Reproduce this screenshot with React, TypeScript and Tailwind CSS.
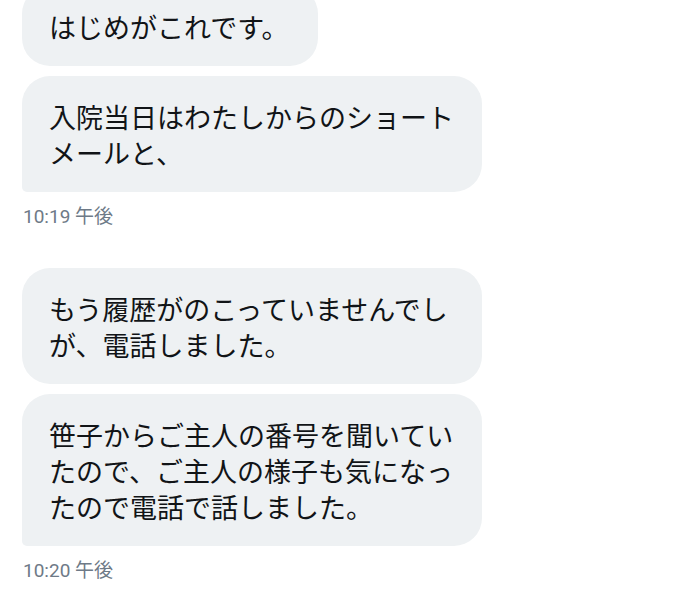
import React from "react";

type Msg = { text: string[]; last?: boolean };
type Group = { msgs: Msg[]; time: string };

const groups: Group[] = [
  {
    msgs: [
      { text: ["はじめがこれです。"] },
      { text: ["入院当日はわたしからのショート", "メールと、"], last: true },
    ],
    time: "10:19 午後",
  },
  {
    msgs: [
      { text: ["もう履歴がのこっていませんでし", "が、電話しました。"] },
      {
        text: ["笹子からご主人の番号を聞いてい", "たので、ご主人の様子も気になっ", "たので電話で話しました。"],
        last: true,
      },
    ],
    time: "10:20 午後",
  },
];

function Bubble({ msg }: { msg: Msg }) {
  const multi = msg.text.length > 1;
  return (
    <div
      className={`self-start bg-[#eef1f3] text-[#111417] text-[27px] leading-[36px] pl-[27px] pr-[29px] pt-[23px] pb-[21px] rounded-[28px] ${
        multi ? "w-[460px]" : ""
      } ${msg.last ? "rounded-bl-[5px]" : ""}`}
      style={{ fontFamily: '"Noto Sans CJK JP", sans-serif' }}
    >
      {msg.text.map((l, i) => (
        <div key={i} className="whitespace-nowrap">
          {l}
        </div>
      ))}
    </div>
  );
}

export default function App() {
  return (
    <div className="w-[676px] h-[598px] overflow-hidden bg-white">
      <div className="flex flex-col pl-[22px] -mt-[14px] gap-[38px]">
        {groups.map((g, gi) => (
          <div key={gi} className="flex flex-col">
            <div className="flex flex-col gap-[10px]">
              {g.msgs.map((m, mi) => (
                <Bubble key={mi} msg={m} />
              ))}
            </div>
            <div
              className="mt-[12px] text-[19px] leading-[26px] text-[#6e7a87] pl-[1px]"
              style={{ fontFamily: 'Roboto, "Noto Sans CJK JP", sans-serif' }}
            >
              {g.time}
            </div>
          </div>
        ))}
      </div>
    </div>
  );
}
